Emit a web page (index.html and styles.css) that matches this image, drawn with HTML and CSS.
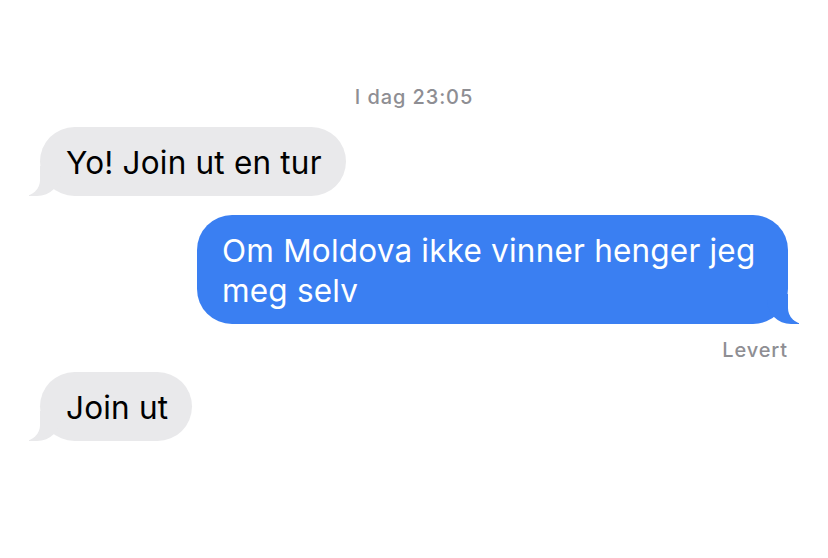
FILE: index.html
```html
<!DOCTYPE html>
<html lang="no">
<head>
<meta charset="utf-8">
<link rel="stylesheet" href="styles.css">
</head>
<body>
<main class="chat">
  <div class="stamp"><span class="day">I dag</span> 23:05</div>
  <div class="bubble them first">Yo! Join ut en tur</div>
  <div class="bubble me">Om Moldova ikke vinner henger jeg meg selv</div>
  <div class="status">Levert</div>
  <div class="bubble them last">Join ut</div>
</main>
</body>
</html>
```

FILE: styles.css
```css
html, body {
  margin: 0;
  padding: 0;
  background: #ffffff;
}
body {
  width: 828px;
  height: 558px;
  overflow: hidden;
  font-family: Inter, "Noto Sans", "Liberation Sans", sans-serif;
}
.chat {
  display: flex;
  flex-direction: column;
  align-items: flex-start;
  padding: 85px 40px 0 40px;
}
.stamp {
  align-self: center;
  font-size: 20px;
  line-height: 24px;
  color: #8e8e93;
  font-weight: 500;
  letter-spacing: 0.9px;
  margin-bottom: 18px;
}
.bubble {
  position: relative;
  font-size: 31.5px;
  line-height: 40px;
  letter-spacing: 0.2px;
  padding: 16px 24px 13px 26px;
  border-radius: 35px;
  max-width: 536px;
}
.them {
  background: #e9e9eb;
  color: #000;
}
.me {
  align-self: flex-end;
  background: #3a7ff2;
  color: #fff;
  margin-top: 19px;
  padding-left: 25px;
  padding-right: 30px;
}
.bubble::before,
.bubble::after {
  content: "";
  position: absolute;
  bottom: 0;
  height: 30px;
}
.them::before {
  left: -11px;
  width: 32px;
  background: #e9e9eb;
  border-bottom-right-radius: 24px;
}
.them::after {
  left: -40px;
  width: 40px;
  background: #fff;
  border-bottom-right-radius: 16px;
}
.me::before {
  right: -11px;
  width: 32px;
  background: #3a7ff2;
  border-bottom-left-radius: 24px;
}
.me::after {
  right: -40px;
  width: 40px;
  background: #fff;
  border-bottom-left-radius: 16px;
}
.status {
  align-self: flex-end;
  font-size: 20px;
  line-height: 24px;
  font-weight: 500;
  letter-spacing: 0.9px;
  color: #8e8e93;
  margin-top: 14px;
}
.last {
  margin-top: 10px;
}
```
